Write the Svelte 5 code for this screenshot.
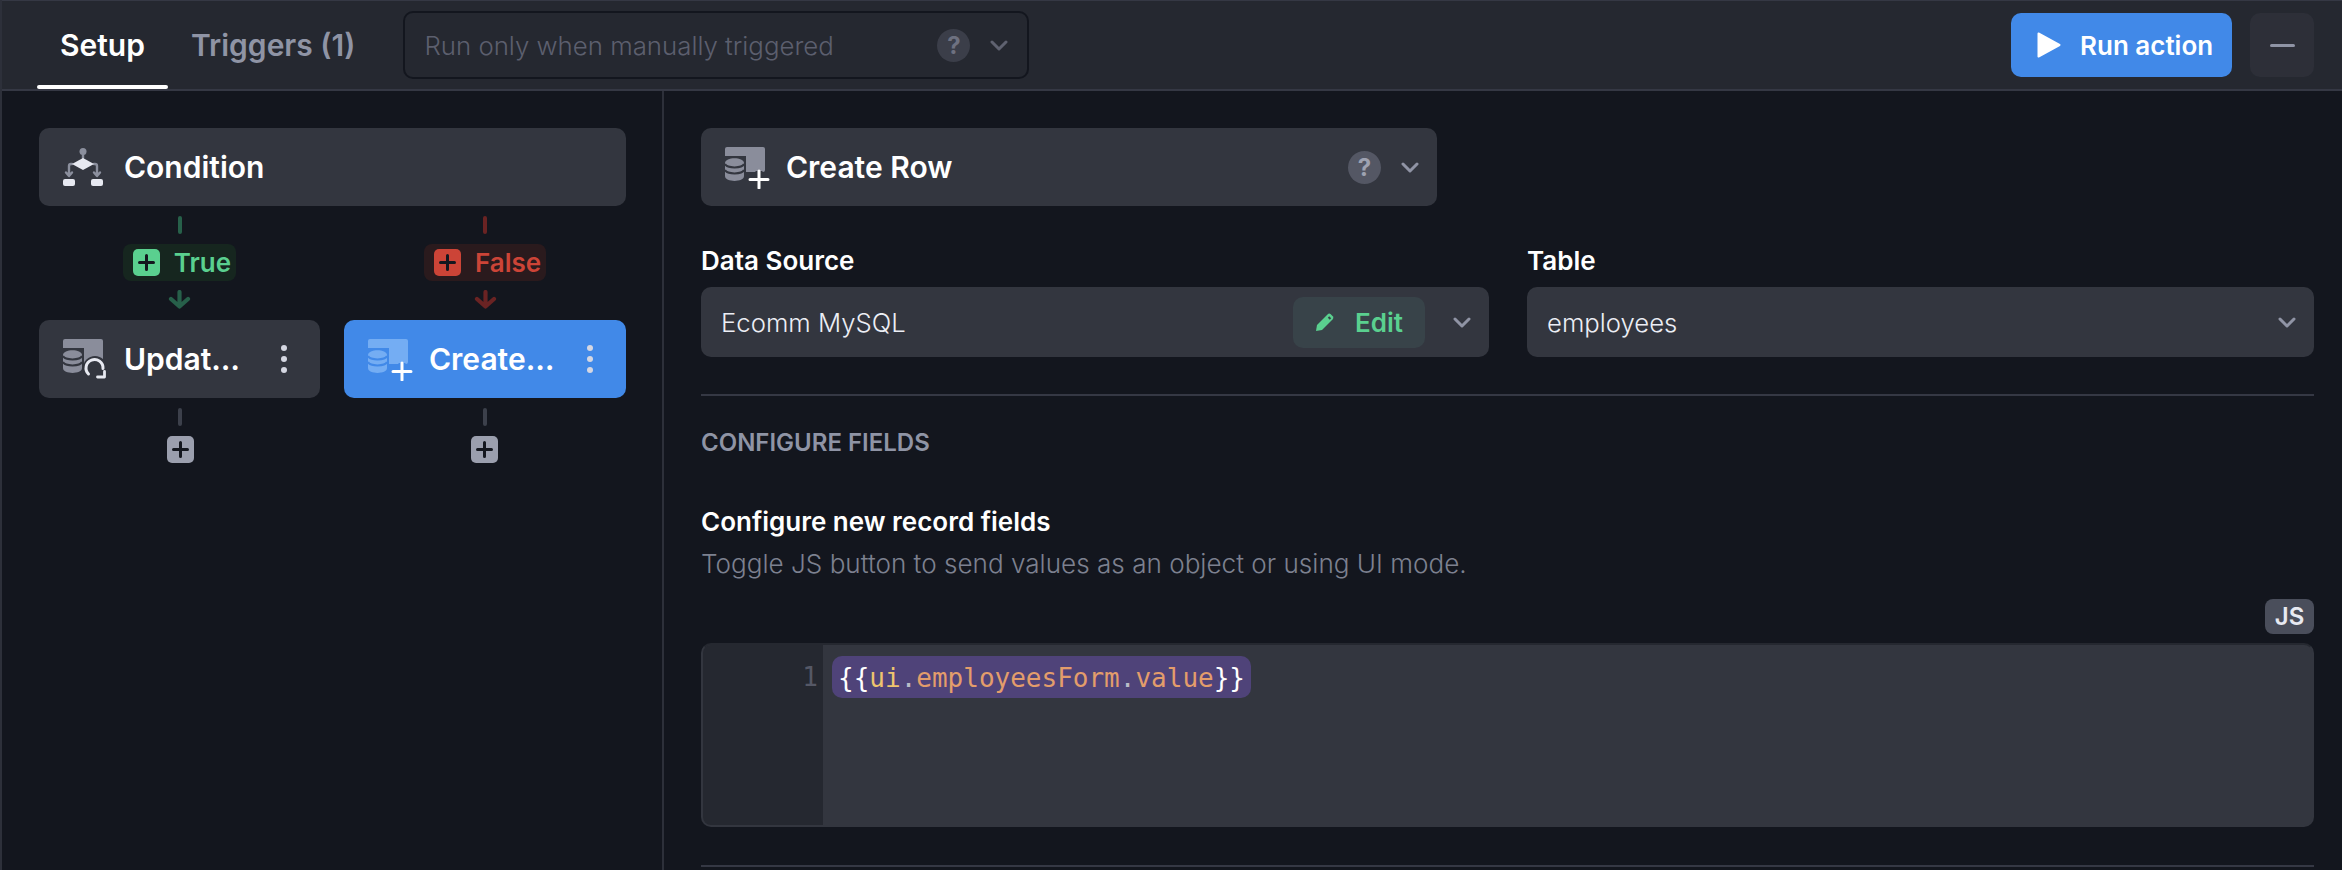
<script>
  const chev = "M2 2 L9 9 L16 2";
</script>

{#snippet plus(cls)}
  <span class="plus {cls}">
    <svg width="17" height="17" viewBox="0 0 17 17"><path d="M8.5 1.500V15.500M1.500 8.500H15.500" fill="none" stroke="currentColor" stroke-width="3" stroke-linecap="round"/></svg>
  </span>
{/snippet}

{#snippet db()}
  <rect x="0" y="0" width="40" height="25" rx="2" class="sq"/>
  <path d="M0 9 H21 V36 H0 Z" class="cut"/>
  <path d="M0 16 C0 9.500 19 9.500 19 16 V29 C19 35.500 0 35.500 0 29 Z" class="cyl"/>
  <path d="M0 17 C2 21.500 17 21.500 19 17 M0 23 C2 27.500 17 27.500 19 23" class="band"/>
{/snippet}

{#snippet createIcon()}
  <svg class="ic icw" width="47" height="42" viewBox="0 0 47 42">
    {@render db()}
    <path d="M34 24V41M25 32.500H43" fill="none" class="halo"/>
    <path d="M34 24V41M25 32.500H43" fill="none" stroke="#fff" stroke-width="3" stroke-linecap="round"/>
  </svg>
{/snippet}

{#snippet chevron(cls)}
  <svg class="chev {cls}" width="18" height="11" viewBox="0 0 18 11"><path d={chev} fill="none" stroke="currentColor" stroke-width="3" stroke-linecap="round" stroke-linejoin="round"/></svg>
{/snippet}

{#snippet help(cls)}
  <span class="help {cls}">?</span>
{/snippet}

{#snippet dots()}
  <span class="dots"><i></i><i></i><i></i></span>
{/snippet}

{#snippet arrow()}
  <svg class="arrow" width="23" height="19" viewBox="0 0 23 19"><path d="M11.500 2V15M3 9L11.500 16.500L20 9" fill="none" stroke="currentColor" stroke-width="4.200" stroke-linecap="round" stroke-linejoin="round"/></svg>
{/snippet}

<div class="root">
  <header class="top">
    <nav class="tabs">
      <span class="tab active">Setup</span>
      <span class="tab">Triggers (1)</span>
    </nav>
    <div class="trigger">
      <span class="ph">Run only when manually triggered</span>
      {@render help("dim")}
      {@render chevron("dimchev")}
    </div>
    <div class="spacer"></div>
    <button class="run">
      <svg width="24" height="26" viewBox="0 0 24 26"><path d="M1.500 1.500 L22.500 13 L1.500 24.500 Z" fill="#fff" stroke="#fff" stroke-width="2" stroke-linejoin="round"/></svg>
      Run action
    </button>
    <button class="min" aria-label="Minimize"><span></span></button>
  </header>

  <div class="main">
    <aside class="side">
      <div class="block cond">
        <svg class="ic" width="40" height="38" viewBox="0 0 40 38">
          <path d="M20 3V10M9 16H8Q6 16 6 18V27M31 16H32Q34 16 34 18V27M3 24.500L6 28L9 24.500M31 24.500L34 28L37 24.500" fill="none" stroke="#8b8f9d" stroke-width="2.400" stroke-linecap="round" stroke-linejoin="round"/>
          <circle cx="20" cy="3.500" r="3.500" fill="#8b8f9d"/>
          <path d="M20 10L31 16L20 22L9 16Z" fill="#e7e9f1"/>
          <rect x="0" y="31" width="12" height="7" rx="2" fill="#e7e9f1"/>
          <rect x="28" y="31" width="12" height="7" rx="2" fill="#e7e9f1"/>
        </svg>
        <span class="bt">Condition</span>
      </div>
      <div class="branches">
        <div class="branch green">
          <span class="stub"></span>
          <div class="pill">{@render plus("p-green")}<span>True</span></div>
          {@render arrow()}
          <div class="block node">
            <svg class="ic icw" width="47" height="42" viewBox="0 0 47 42">
              {@render db()}
              <circle cx="32" cy="29" r="12" class="cut"/>
              <path d="M25.500 35A8.500 8.500 0 1 1 40 29.500" fill="none" stroke="#e7e9f1" stroke-width="3" stroke-linecap="round"/>
              <path d="M41.500 32.500V38H34.500" fill="none" stroke="#e7e9f1" stroke-width="2.800" stroke-linecap="round" stroke-linejoin="round"/>
            </svg>
            <span class="bt">Updat…</span>
            {@render dots()}
          </div>
          <span class="stub gray"></span>
          {@render plus("p-gray nudge-r")}
        </div>
        <div class="branch red">
          <span class="stub"></span>
          <div class="pill">{@render plus("p-red")}<span>False</span></div>
          {@render arrow()}
          <div class="block node selected">
            {@render createIcon()}
            <span class="bt">Create…</span>
            {@render dots()}
          </div>
          <span class="stub gray"></span>
          {@render plus("p-gray nudge-l")}
        </div>
      </div>
    </aside>

    <section class="panel">
      <div class="block head">
        {@render createIcon()}
        <span class="bt">Create Row</span>
        <span class="spacer"></span>
        {@render help("")}
        {@render chevron("")}
      </div>

      <div class="fields">
        <div class="field">
          <span class="lbl">Data Source</span>
          <div class="input">
            <span>Ecomm MySQL</span>
            <span class="spacer"></span>
            <span class="edit">
              <svg width="20" height="20" viewBox="0 0 20 20"><path d="M1 19 L2 13 L12.500 2.500 Q14 1 15.500 2 L18 4.500 Q19 6 17.500 7.500 L7 18 Z" fill="#5ad08f"/><path d="M13.500 5 L15.500 7" stroke="#384349" stroke-width="2"/></svg>
              Edit
            </span>
            {@render chevron("")}
          </div>
        </div>
        <div class="field">
          <span class="lbl">Table</span>
          <div class="input">
            <span>employees</span>
            <span class="spacer"></span>
            {@render chevron("")}
          </div>
        </div>
      </div>

      <hr />
      <h3>CONFIGURE FIELDS</h3>
      <div class="cfg-title">Configure new record fields</div>
      <div class="cfg-sub">Toggle JS button to send values as an object or using UI mode.</div>
      <div class="js-row"><span class="js">JS</span></div>
      <div class="editor">
        <div class="gutter">1</div>
        <div class="code"><span class="hl"><span class="w">{"{{"}</span><span class="y">ui</span><span class="d">.</span><span class="o">employeesForm</span><span class="d">.</span><span class="o">value</span><span class="w">{"}}"}</span></span></div>
      </div>
      <hr class="last" />
    </section>
  </div>
</div>

<style>
  :global(body) { margin: 0; background: #13161e; }
  .root {
    width: 2342px; height: 870px; overflow: hidden; box-sizing: border-box;
    display: flex; flex-direction: column;
    font-family: Inter, "Liberation Sans", sans-serif; color: #fff;
    background: #13161e; border-left: 2px solid #2d303a;
  }
  .top {
    height: 91px; box-sizing: border-box; flex: none; display: flex; align-items: center;
    background: #252830; border-top: 1px solid #353844; border-bottom: 2px solid #353844;
    padding: 0 28px 0 35px;
  }
  .tabs { display: flex; align-self: stretch; }
  .tab {
    padding: 0 23px; display: flex; align-items: center; font-size: 30px; font-weight: 600;
    color: #8f94a5; position: relative;
  }
  .tab.active { color: #fff; }
  .tab.active::after {
    content: ""; position: absolute; left: 0; right: 0; bottom: 0; height: 4px;
    background: #fff; border-radius: 2px;
  }
  .trigger {
    margin-left: 25px; width: 626px; height: 68px; box-sizing: border-box;
    border: 2px solid #13161e; border-radius: 10px; display: flex; align-items: center;
    padding: 0 19px; font-size: 25.8px; font-weight: 300;
  }
  .ph { flex: 1; color: #5c5f6e; }
  .spacer { flex: 1; }
  .run {
    width: 221px; height: 64px; border: 0; border-radius: 10px; background: #4189e8;
    color: #fff; font: 600 26px Inter, sans-serif; display: flex; align-items: center;
    gap: 19px; padding: 0 0 0 26px;
  }
  .min {
    width: 64px; height: 64px; margin-left: 18px; border: 0; border-radius: 10px; background: #2d2f38;
    display: flex; align-items: center; justify-content: center; padding: 0;
  }
  .min span { width: 25px; height: 3px; border-radius: 2px; background: #8f94a5; }

  .main { flex: 1; display: flex; min-height: 0; }
  .side {
    width: 662px; flex: none; box-sizing: border-box; border-right: 2px solid #2d303a;
    padding: 37px 36px 0 37px;
  }
  .block {
    height: 78px; box-sizing: border-box; background: #33363f; border-radius: 10px;
    display: flex; align-items: center; padding: 0 24px; font-weight: 600; font-size: 30px; color: #fff;
    --cut: #33363f; --sq: #8a8d9b; --cyl: #8a8d9b;
  }
  .bt { margin-left: 21px; white-space: nowrap; }
  .ic { flex: none; }
  .icw { margin-right: -7px; margin-top: 2px; }
  .halo { stroke: var(--cut); stroke-width: 7; }
  .branches { display: grid; grid-template-columns: 281px 282px; column-gap: 24px; }
  .branch { display: flex; flex-direction: column; align-items: center; }
  .branch > .node { align-self: stretch; margin-top: 11px; position: relative; }
  .green { color: #27604a; }
  .red { color: #6a2323; }
  .stub { width: 4px; height: 18px; border-radius: 2px; background: currentColor; margin-top: 10px; flex: none; }
  .stub.gray { background: #3c404b; }
  .pill {
    margin-top: 10px; height: 37px; display: flex; align-items: center; gap: 14px;
    padding: 0 5px 0 10px; border-radius: 8px; font-size: 26px; font-weight: 600;
  }
  .green .pill { background: #16261f; color: #5ad08f; }
  .red .pill { background: #2a1a1d; color: #cc4437; }
  .arrow { margin-top: 9px; flex: none; }
  .plus {
    width: 27px; height: 27px; border-radius: 5px; display: flex; align-items: center;
    justify-content: center; color: #14171f; flex: none;
  }
  .p-green { background: #5ad08f; }
  .p-red { background: #cc4437; }
  .p-gray { background: #9b9fae; margin-top: 10px; }
  .nudge-r { margin-left: 2px; }
  .nudge-l { margin-right: 2px; }
  .node .bt { flex: 1; overflow: hidden; }
  .selected { background: #4189e8; --cut: #4189e8; --sq: #74adf3; --cyl: #74adf3; }
  .sq { fill: var(--sq); }
  .cut { fill: var(--cut); }
  .cyl { fill: var(--cyl); }
  .band { fill: none; stroke: var(--cut); stroke-width: 2; }
  .dots { display: flex; flex-direction: column; gap: 5px; flex: none; }
  .dots i { width: 6px; height: 6px; border-radius: 50%; background: #d5d7e2; display: block; }
  .node { padding-right: 33px; }

  .panel { flex: 1; min-width: 0; padding: 37px 28px 0 37px; }
  .head { width: 736px; padding: 0 24px; }
  .help {
    width: 33px; height: 33px; border-radius: 50%; background: #545764; color: #9ea2b1;
    font-size: 24px; font-weight: 700; display: flex; align-items: center; justify-content: center; flex: none;
  }
  .help.dim { background: #3b3e49; color: #6e7180; margin-right: 20px; }
  .chev { color: #9094a5; flex: none; }
  .chev.dimchev { color: #5f6270; }
  .head .help { margin-right: 20px; }
  .head .chev { margin-right: -6px; }
  .fields { display: grid; grid-template-columns: 788px 787px; column-gap: 38px; margin-top: 38px; }
  .field { display: flex; flex-direction: column; }
  .lbl { font-size: 26px; font-weight: 600; height: 43px; line-height: 34px; }
  .input {
    height: 70px; box-sizing: border-box; background: #33363f; border-radius: 10px;
    display: flex; align-items: center; padding: 0 18px 0 20px; font-size: 25.7px; font-weight: 300; color: #eceef5;
  }
  .edit {
    height: 51px; width: 132px; box-sizing: border-box; margin-right: 28px; border-radius: 10px;
    background: #384349; color: #5ad08f; font-weight: 600; font-size: 26px;
    display: flex; align-items: center; justify-content: center; gap: 20px;
  }
  hr { border: 0; height: 2px; background: #353844; margin: 37px 0 0; }
  h3 { margin: 32px 0 0; font-size: 24px; line-height: 30px; font-weight: 600; color: #8f94a5; }
  .cfg-title { margin-top: 47px; font-size: 26px; line-height: 34px; font-weight: 600; }
  .cfg-sub { margin-top: 8px; font-size: 26.1px; line-height: 34px; font-weight: 300; color: #7d8190; }
  .js-row { display: flex; justify-content: flex-end; margin-top: 18px; }
  .js {
    width: 49px; height: 35px; background: #4a4e5b; border-radius: 8px; font-size: 24px; font-weight: 600;
    display: flex; align-items: center; justify-content: center; color: #e7e9f1;
  }
  .editor {
    margin-top: 9px; height: 184px; background: #33363f; border-radius: 10px; display: flex; overflow: hidden;
    border: 2px solid #2d303a; box-sizing: border-box; border-color: #252830 #33363f #33363f #33363f;
  }
  .gutter {
    width: 120px; flex: none; background: #252830; color: #555866; text-align: right; box-sizing: border-box;
    padding: 14px 5px 0 0; font: 26px/36px "DejaVu Sans Mono", monospace;
  }
  .code { padding: 11px 0 0 9px; }
  .hl {
    display: inline-block; background: #4f4379; border-radius: 10px; height: 42px; padding: 0 6px;
    font: 26px/44px "DejaVu Sans Mono", monospace; white-space: pre;
  }
  .w { color: #fff; }
  .y { color: #eec46e; }
  .d { color: #b9bcc8; }
  .o { color: #e39d6b; }
  hr.last { margin-top: 38px; }
</style>
